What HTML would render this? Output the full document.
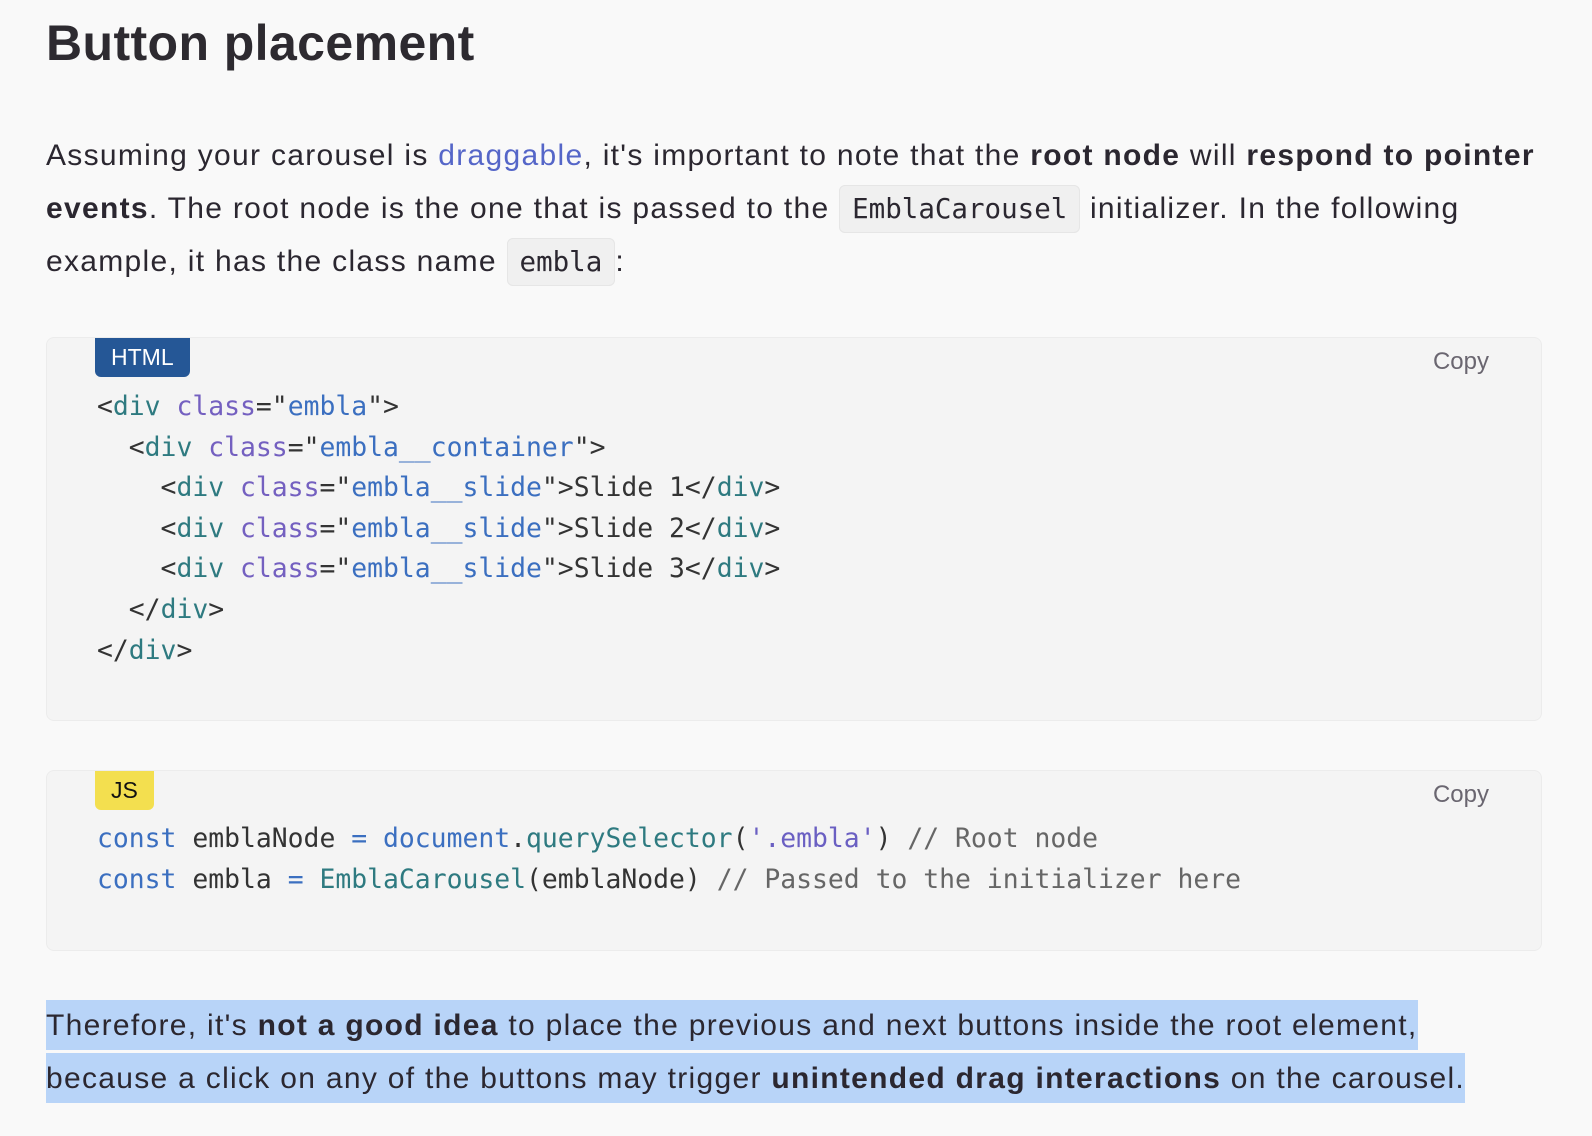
<!DOCTYPE html>
<html><head><meta charset="utf-8"><style>
*{margin:0;padding:0;box-sizing:border-box}
body{width:1592px;height:1136px;background:#f9f9f9;font-family:"Liberation Sans",sans-serif;color:#2b2730;position:relative;overflow:hidden}
h1{position:absolute;left:46px;top:14px;font-size:50px;font-weight:bold;letter-spacing:0.4px;color:#2d2a30}
.p{position:absolute;left:46px;font-size:30px;white-space:nowrap;line-height:53px;letter-spacing:1.3px}
a{color:#5566c8;text-decoration:none}
code{font-family:"DejaVu Sans Mono",monospace;font-size:27.5px;letter-spacing:0;background:#f0f0f0;border:1px solid #e6e6e6;border-radius:6px;padding:7px 12px}
.blk{position:absolute;left:46px;width:1496px;background:#f4f4f4;border:1px solid #ececec;border-radius:8px}
.tag{position:absolute;left:48px;top:0;border-radius:0 0 6px 6px;font-size:23px;line-height:39px;padding:0 16px}
.copy{position:absolute;right:52px;font-size:24px;color:#6a6670}
pre{position:absolute;left:50px;font-family:"DejaVu Sans Mono",monospace;font-size:26.4px;line-height:40.6px;color:#333}
.t{color:#2e7a80}.a{color:#7460c0}.s{color:#3b6fc0}.k{color:#3b6fc0}.c{color:#666}.str{color:#6a5fc2}
.hl{background:#b8d4f8;padding:9px 0 8px}
</style></head><body>
<h1>Button placement</h1>
<div class="p" style="top:129px">Assuming your carousel is <a>draggable</a>, it's important to note that the <b>root node</b> will <b>respond to pointer</b></div>
<div class="p" style="top:182px"><b>events</b>. The root node is the one that is passed to the <code>EmblaCarousel</code> initializer. In the following</div>
<div class="p" style="top:235px">example, it has the class name <code>embla</code>:</div>

<div class="blk" style="top:337px;height:384px">
<div class="tag" style="background:#255796;color:#fff">HTML</div>
<div class="copy" style="top:10px">Copy</div>
<pre style="top:49px">&lt;<span class="t">div</span> <span class="a">class</span>="<span class="s">embla</span>"&gt;
  &lt;<span class="t">div</span> <span class="a">class</span>="<span class="s">embla__container</span>"&gt;
    &lt;<span class="t">div</span> <span class="a">class</span>="<span class="s">embla__slide</span>"&gt;Slide 1&lt;/<span class="t">div</span>&gt;
    &lt;<span class="t">div</span> <span class="a">class</span>="<span class="s">embla__slide</span>"&gt;Slide 2&lt;/<span class="t">div</span>&gt;
    &lt;<span class="t">div</span> <span class="a">class</span>="<span class="s">embla__slide</span>"&gt;Slide 3&lt;/<span class="t">div</span>&gt;
  &lt;/<span class="t">div</span>&gt;
&lt;/<span class="t">div</span>&gt;</pre>
</div>

<div class="blk" style="top:770px;height:181px">
<div class="tag" style="background:#f3df4f;color:#111;padding:0 16px">JS</div>
<div class="copy" style="top:10px">Copy</div>
<pre style="top:48px"><span class="k">const</span> emblaNode <span class="k">=</span> <span class="k">document</span>.<span class="t">querySelector</span>(<span class="str">'.embla'</span>) <span class="c">// Root node</span>
<span class="k">const</span> embla <span class="k">=</span> <span class="t">EmblaCarousel</span>(emblaNode) <span class="c">// Passed to the initializer here</span></pre>
</div>

<div class="p" style="top:999px"><span class="hl">Therefore, it's <b>not a good idea</b> to place the previous and next buttons inside the root element,</span></div>
<div class="p" style="top:1052px"><span class="hl">because a click on any of the buttons may trigger <b>unintended drag interactions</b> on the carousel.</span></div>
</body></html>
